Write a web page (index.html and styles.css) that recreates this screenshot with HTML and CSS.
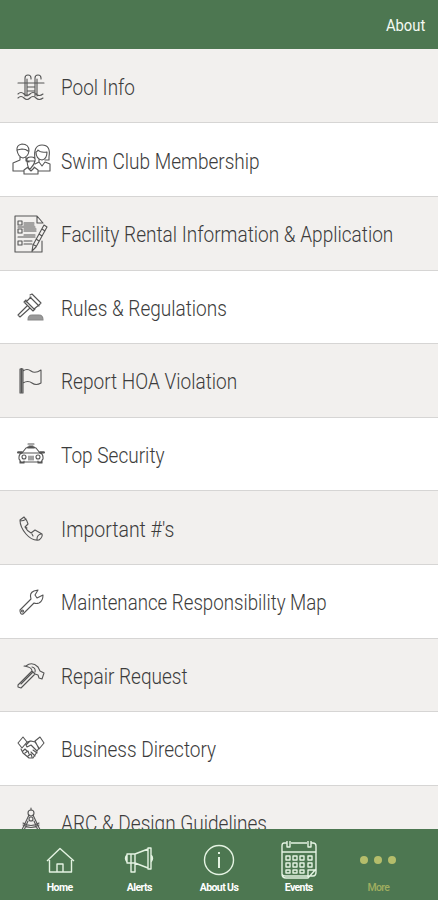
FILE: index.html
```html
<!DOCTYPE html>
<html lang="en">
<head>
<meta charset="utf-8">
<title>About</title>
<link rel="stylesheet" href="styles.css">
</head>
<body>
<div class="app">
<header class="topbar"><span>About</span></header>
<main class="list">
<a class="row"><svg class="icon" viewBox="0 0 40 40"><path d="M7 16H33M14 29V11q0-3 3-3t3 3v1M24 29V11q0-3 3-3t3 3v1M16 29V12M26 29V12M16 20h8M16 24h8M7 27q3-3 6 0t6 0 6 0 7 0M7 31q3-3 6 0t6 0 6 0 7 0"/></svg><span class="label pool">Pool Info</span></a>
<a class="row"><svg class="icon" viewBox="0 0 40 40"><path d="M6 10q-1-6 5-7 7 0 7 7-1 6-6 7-5-1-6-8l5-1q4 0 6 2M9 16v3l-7 3v8h11M15 16v4l3 1M24 18q-2-14 7-14t7 12v3h-4M25 11q0 7 6 8 5-1 5-8-7 1-9-2-1 2-2 2M28 18v3l-4 2M28 21l3 4 3-4 5 2v7H27M16 20q-1-4 4-4t4 4-4 7-4-7h8M17 26l-4 3v4h14v-4l-4-3M17 27l3 3 3-3"/></svg><span class="label swim">Swim Club Membership</span></a>
<a class="row"><svg class="icon" viewBox="0 0 40 40"><path d="M4 2h22l6 7M4 2v36h27V27M26 2v7h6M13 9h10M13 11h10M13 15h12M13 17h12M13 21h11M13 27h8M13 30h8M7 7h4v4H7zM7 15h4v4H7zM7 27h4v4H7zM7 13h17M7 23h17M33 11l3 2-11 20-4 4 1-6zM31 15l3 2M28 20l3 2M25 25l3 2M23 31l2 1"/></svg><span class="label facility">Facility Rental Information &amp; Application</span></a>
<a class="row"><svg class="icon" viewBox="0 0 40 40"><path d="M19 9l9 9M15 13l8 8M19 7l2-1 9 9-2 2M15 12l-2 2 9 9 2-2M20 9l-5 5M28 17l-5 4M16 18L7 27l2 2 10-9"/><path class="solid" d="M17 32q0-5 4-5h7q4 0 4 5z"/></svg><span class="label rules">Rules &amp; Regulations</span></a>
<a class="row"><svg class="icon" viewBox="0 0 40 40"><path d="M9 8h3v24H9zM12 10q4-3 8 0t10-1v13q-5 3-9 0t-9 0"/><path class="thick" d="M10.5 8v23"/></svg><span class="label report">Report HOA Violation</span></a>
<a class="row"><svg class="icon" viewBox="0 0 40 40"><path d="M11 18l4-5q5-2 10 0l4 5q3 1 3 4v2l-2 3H10l-2-3v-2q0-3 3-4zM9 18h22M7 17h4M29 17h4M9 25v3h4v-2M27 26v2h4v-3M18 11h4M17 9h6M18 21v4M20 21v4M22 21v4"/><circle cx="13" cy="22" r="2"/><circle cx="27" cy="22" r="2"/><path class="thick" d="M17 12.5h6M7 17.5h4M29 17.5h4"/></svg><span class="label security">Top Security</span></a>
<a class="row"><svg class="icon" viewBox="0 0 40 40"><path d="M9 11l4-3q3 3 4 7l-3 3q2 4 6 6l4-3 7 4q1 3-3 6-7 1-13-6T9 11zM9 12q4 0 6-2M14 18l2 1M21 25l1 2M26 30q0-4 4-5"/></svg><span class="label important">Important #'s</span></a>
<a class="row"><svg class="icon" viewBox="0 0 40 40"><path d="M9 28l11-11q-2-6 3-8l4-1-3 5 2 3 6-3q0 6-4 8-3 1-5 0L12 32q-3 1-3-4z"/><circle cx="11.500" cy="29" r="1"/></svg><span class="label maintenance">Maintenance Responsibility Map</span></a>
<a class="row"><svg class="icon" viewBox="0 0 40 40"><path d="M7 29l14-14 3 3-14 14-3-1zM10 28l12-12M15 10q6-5 12 1l2 4 4 2-2 6-3-1-1-3-3-1-3-3q0-4-8-5zM21 11q4 1 3 5"/></svg><span class="label repair">Repair Request</span></a>
<a class="row"><svg class="icon" viewBox="0 0 40 40"><path d="M7 14l5-6 4 5-5 6zM24 12l5-4 4 6-5 6zM16 13l4-1 4 1 4 6-2 3-6-6-4 2-1-2 4-4M10 20l2 4 6 5h4l4-6M12 22l2-2 2 2M14 24l3-2 1 3M17 27l3-2 1 3M20 23l4 4M22 21l4 3"/></svg><span class="label business">Business Directory</span></a>
<a class="row"><svg class="icon" viewBox="0 0 40 40"><circle cx="20" cy="10" r="3"/><circle cx="20" cy="16" r="2"/><path d="M20 7V5M18 12L8 33M22 12l10 21M17 18l-6 14M23 18l6 14M12 20q8 5 16 0M12 22q8 5 16 0"/></svg><span class="label arc">ARC &amp; Design Guidelines</span></a>
</main>
<nav class="tabs">
<a class="tab"><svg viewBox="0 0 40 40"><path d="M7 21L20 8.500l14 12.500M9.500 20v12h22V20M17 32v-8h6v8"/></svg><span>Home</span></a>
<a class="tab"><svg viewBox="0 0 40 40"><path d="M8 14h8v9H8zM8 15q-3 3 0 7M16 14l13-5v19l-13-5M12 14v9M29 8h3v21h-3zM32 15q3 3 0 7M12 23v9h4v-9"/></svg><span>Alerts</span></a>
<a class="tab"><svg viewBox="0 0 40 40"><circle cx="20" cy="20" r="14.500"/><path class="info" d="M20 17v11M20 12v2"/></svg><span>About Us</span></a>
<a class="tab"><svg viewBox="0 0 40 40"><path d="M8 3H5q-2 0-2 3v28q0 4 4 4h22l8-9V6q0-3-3-3h-2M12 3h16M3 12h34M8 1v6h3V1M29 1v6h3V1M3 34q1 2 3 2h28q3 0 3-4V28M29 37v-7h7M7 16h4v4H7zM14 16h4v4h-4zM21 16h4v4h-4zM29 16h4v4h-4zM7 23h4v4H7zM14 23h4v4h-4zM21 23h4v4h-4zM29 23h4v4h-4zM7 30h4v3H7zM14 30h4v3h-4zM21 30h4v3h-4z"/></svg><span>Events</span></a>
<a class="tab more"><svg viewBox="0 0 40 40"><circle cx="6" cy="20" r="4"/><circle cx="20" cy="20" r="4"/><circle cx="34" cy="20" r="4"/></svg><span>More</span></a>
</nav>
</div>
</body>
</html>
```
FILE: styles.css
```css
* { box-sizing: border-box; }
body { margin: 0; font-family: Roboto, sans-serif; background: #4d7751; }
.app { height: 900px; display: flex; flex-direction: column; overflow: hidden; }
.topbar { flex: 0 0 49px; background: #4d7751; color: #f4faf3; display: flex; justify-content: flex-end; align-items: center; padding: 1px 13px 0 0; font-size: 17px; }
.topbar span { transform: scaleX(.87); transform-origin: right; }
.list { flex: 1; min-height: 0; overflow: hidden; background: #f3f1ef; padding-top: .8px; }
.row { height: 73.6px; display: flex; align-items: center; padding: 2px 0 0 11px; gap: 10px; border-bottom: 1.5px solid #d6d5d4; background: #fff; }
.row:nth-child(odd) { background: #f2f0ee; }
.icon { width: 40px; height: 40px; flex: none; fill: none; stroke: #555; stroke-width: 1.1; stroke-linejoin: round; stroke-linecap: round; }
.icon .solid { fill: #999; stroke: #888; }
.icon .thick { stroke-width: 2; }
.label { font-size: 22px; font-weight: 300; line-height: 30px; color: #3c3c3c; white-space: nowrap; transform: scaleX(.865); transform-origin: left; padding-top: 2px; }
.pool { transform: scaleX(.86); }
.important { transform: scaleX(.885); }
.maintenance { transform: scaleX(.85); }
.tabs { flex: 0 0 71px; background: #4d7751; display: flex; justify-content: center; padding-top: 11px; }
.tab { width: 79.7px; display: flex; flex-direction: column; align-items: center; color: #fff; font-size: 10.5px; font-weight: 700; line-height: 14px; gap: 1px; }
.tab svg { width: 40px; height: 40px; fill: none; stroke: #e4f3e2; stroke-width: 1.4; stroke-linejoin: round; }
.tab .info { stroke-width: 2; }
.tab span { letter-spacing: -.6px; }
.tab.more { color: #a0ae60; font-weight: 500; }
.tab.more svg { fill: #b5bd6b; stroke: none; overflow: visible; }
```
